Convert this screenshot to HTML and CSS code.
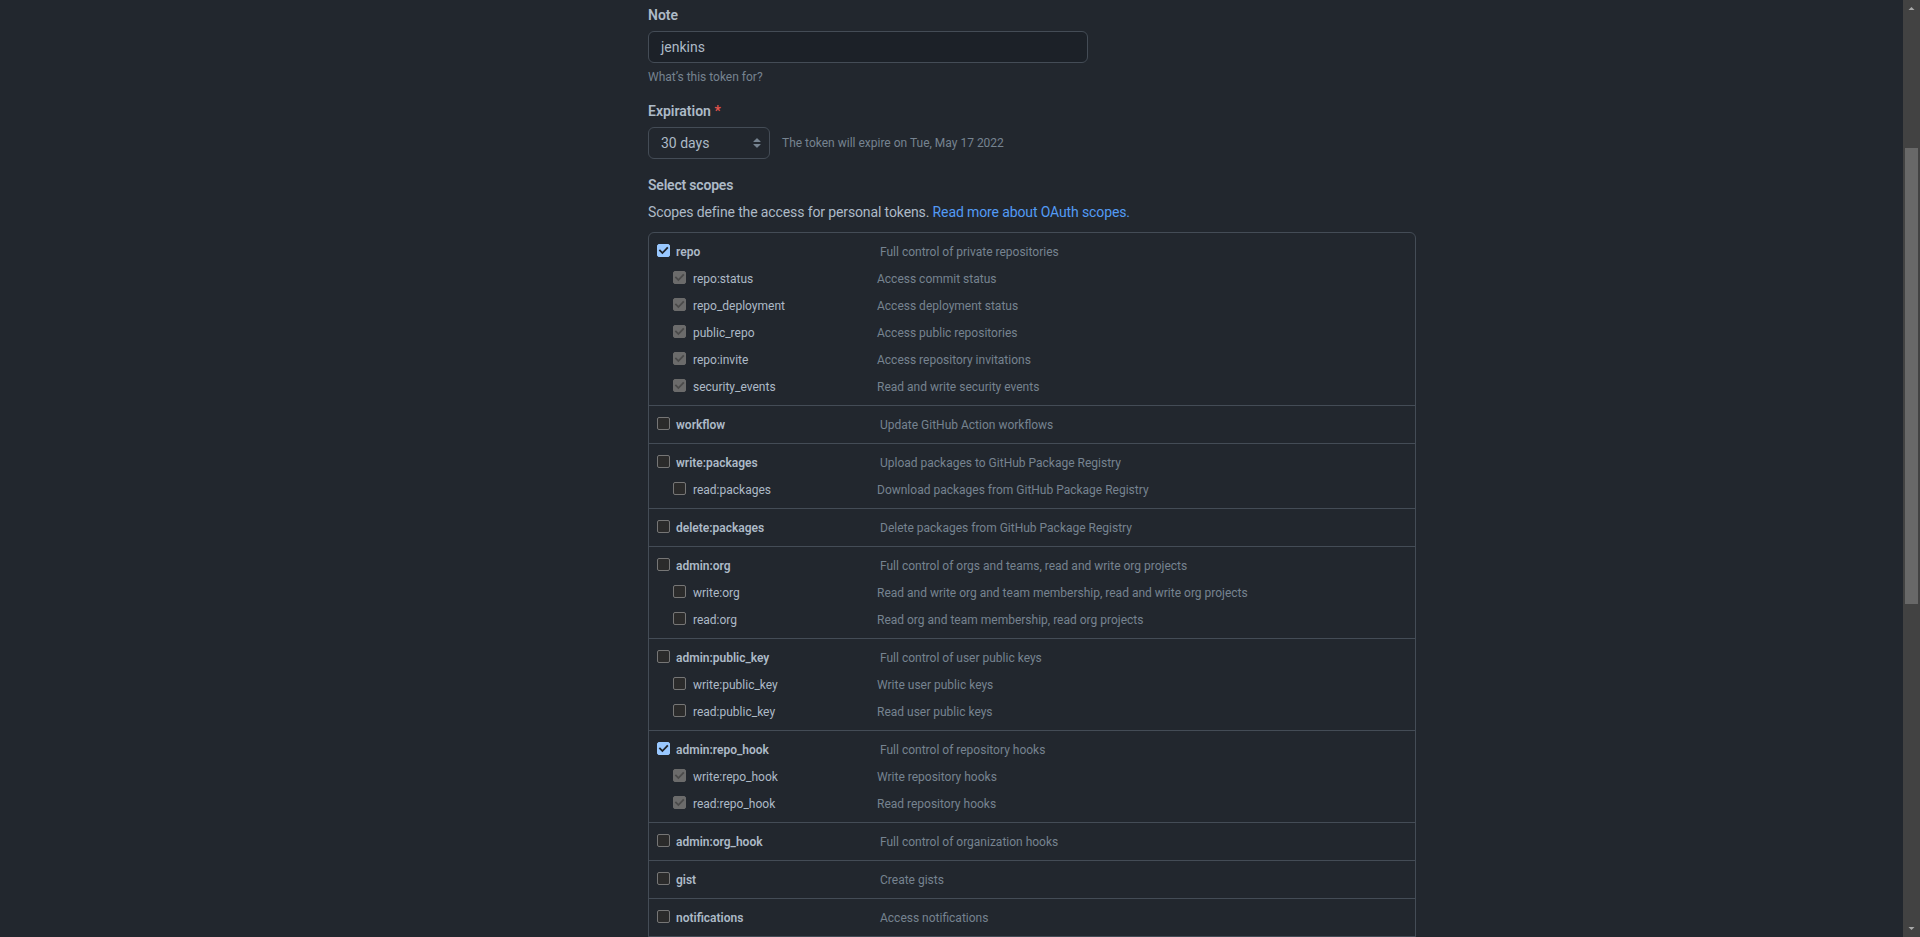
FILE: index.html
```html
<!DOCTYPE html>
<html lang="en">
<head>
<meta charset="utf-8">
<title>New personal access token</title>
<link rel="stylesheet" href="styles.css">
</head>
<body>
<div class="viewport">
  <div class="page">
    <div class="layout">
      <div class="sidebar"></div>
      <main class="main">
        <form class="token-form">
          <div class="field">
            <label class="field-label">Note</label>
            <div class="text-input">jenkins</div>
            <p class="hint">What’s this token for?</p>
          </div>

          <div class="field field-exp">
            <label class="field-label">Expiration <span class="req">*</span></label>
            <div class="exp-row">
              <div class="select">
                <span>30 days</span>
                <svg class="select-arrows" width="16" height="16" viewBox="0 0 16 16"><path fill="#768390" d="M4.427 9.427l3.396 3.396a.25.25 0 00.354 0l3.396-3.396A.25.25 0 0011.396 9H4.604a.25.25 0 00-.177.427zM4.427 6.573l3.396-3.396a.25.25 0 01.354 0l3.396 3.396A.25.25 0 0111.396 7H4.604a.25.25 0 01-.177-.427z"/></svg>
              </div>
              <span class="exp-note">The token will expire on Tue, May 17 2022</span>
            </div>
          </div>

          <div class="field field-scopes">
            <label class="field-label">Select scopes</label>
            <p class="scopes-intro">Scopes define the access for personal tokens. <a class="link">Read more about OAuth scopes.</a></p>

            <div class="scopes">
              <div class="group">
                <div class="row"><span class="cb cb-on"><svg viewBox="0 0 13 13"><path d="M3 6.6l2.4 2.4L10.2 4" /></svg></span><span class="name">repo</span><span class="desc">Full control of private repositories</span></div>
                <div class="row sub"><span class="cb cb-dis"><svg viewBox="0 0 13 13"><path d="M3 6.6l2.4 2.4L10.2 4" /></svg></span><span class="name">repo:status</span><span class="desc">Access commit status</span></div>
                <div class="row sub"><span class="cb cb-dis"><svg viewBox="0 0 13 13"><path d="M3 6.6l2.4 2.4L10.2 4" /></svg></span><span class="name">repo_deployment</span><span class="desc">Access deployment status</span></div>
                <div class="row sub"><span class="cb cb-dis"><svg viewBox="0 0 13 13"><path d="M3 6.6l2.4 2.4L10.2 4" /></svg></span><span class="name">public_repo</span><span class="desc">Access public repositories</span></div>
                <div class="row sub"><span class="cb cb-dis"><svg viewBox="0 0 13 13"><path d="M3 6.6l2.4 2.4L10.2 4" /></svg></span><span class="name">repo:invite</span><span class="desc">Access repository invitations</span></div>
                <div class="row sub"><span class="cb cb-dis"><svg viewBox="0 0 13 13"><path d="M3 6.6l2.4 2.4L10.2 4" /></svg></span><span class="name">security_events</span><span class="desc">Read and write security events</span></div>
              </div>

              <div class="group">
                <div class="row"><span class="cb"></span><span class="name">workflow</span><span class="desc">Update GitHub Action workflows</span></div>
              </div>

              <div class="group">
                <div class="row"><span class="cb"></span><span class="name">write:packages</span><span class="desc">Upload packages to GitHub Package Registry</span></div>
                <div class="row sub"><span class="cb"></span><span class="name">read:packages</span><span class="desc">Download packages from GitHub Package Registry</span></div>
              </div>

              <div class="group">
                <div class="row"><span class="cb"></span><span class="name">delete:packages</span><span class="desc">Delete packages from GitHub Package Registry</span></div>
              </div>

              <div class="group">
                <div class="row"><span class="cb"></span><span class="name">admin:org</span><span class="desc">Full control of orgs and teams, read and write org projects</span></div>
                <div class="row sub"><span class="cb"></span><span class="name">write:org</span><span class="desc">Read and write org and team membership, read and write org projects</span></div>
                <div class="row sub"><span class="cb"></span><span class="name">read:org</span><span class="desc">Read org and team membership, read org projects</span></div>
              </div>

              <div class="group">
                <div class="row"><span class="cb"></span><span class="name">admin:public_key</span><span class="desc">Full control of user public keys</span></div>
                <div class="row sub"><span class="cb"></span><span class="name">write:public_key</span><span class="desc">Write user public keys</span></div>
                <div class="row sub"><span class="cb"></span><span class="name">read:public_key</span><span class="desc">Read user public keys</span></div>
              </div>

              <div class="group">
                <div class="row"><span class="cb cb-on"><svg viewBox="0 0 13 13"><path d="M3 6.6l2.4 2.4L10.2 4" /></svg></span><span class="name">admin:repo_hook</span><span class="desc">Full control of repository hooks</span></div>
                <div class="row sub"><span class="cb cb-dis"><svg viewBox="0 0 13 13"><path d="M3 6.6l2.4 2.4L10.2 4" /></svg></span><span class="name">write:repo_hook</span><span class="desc">Write repository hooks</span></div>
                <div class="row sub"><span class="cb cb-dis"><svg viewBox="0 0 13 13"><path d="M3 6.6l2.4 2.4L10.2 4" /></svg></span><span class="name">read:repo_hook</span><span class="desc">Read repository hooks</span></div>
              </div>

              <div class="group">
                <div class="row"><span class="cb"></span><span class="name">admin:org_hook</span><span class="desc">Full control of organization hooks</span></div>
              </div>

              <div class="group">
                <div class="row"><span class="cb"></span><span class="name">gist</span><span class="desc">Create gists</span></div>
              </div>

              <div class="group">
                <div class="row"><span class="cb"></span><span class="name">notifications</span><span class="desc">Access notifications</span></div>
              </div>

              <div class="group group-more"></div>
            </div>
          </div>
        </form>
      </main>
    </div>
  </div>

  <div class="scrollbar">
    <div class="sb-btn"><svg width="17" height="17" viewBox="0 0 17 17"><path d="M5.5 10h6l-3-3z" fill="#a8a8a8"/></svg></div>
    <div class="sb-track"><div class="sb-thumb"></div></div>
    <div class="sb-btn"><svg width="17" height="17" viewBox="0 0 17 17"><path d="M5.5 7h6l-3 3z" fill="#a8a8a8"/></svg></div>
  </div>
</div>
</body>
</html>
```

FILE: styles.css
```css
html, body {
  margin: 0;
  padding: 0;
  height: 100%;
  overflow: hidden;
  background: #22272e;
}

body {
  font-family: Roboto, "Liberation Sans", Arial, sans-serif;
  color: #adbac7;
  font-size: 14px;
  line-height: 1.5;
}

.viewport {
  display: flex;
  height: 100%;
}

.page {
  flex: 1;
  overflow: hidden;
}

.layout {
  width: 1279px;
  box-sizing: border-box;
  margin: 0 auto;
  padding: 0 32px;
  display: flex;
  gap: 48px;
}

.sidebar {
  flex: 0 0 256px;
}

.main {
  flex: 1;
  padding-top: 5px;
}

.token-form {
  width: 768px;
}

.field-label {
  display: block;
  font-weight: 600;
  font-size: 14px;
  line-height: 21px;
  color: #adbac7;
}

.req {
  color: #e5534b;
}

.text-input {
  margin-top: 5px;
  width: 440px;
  height: 32px;
  box-sizing: border-box;
  padding: 0 12px;
  background: #1c2128;
  border: 1px solid #444c56;
  border-radius: 6px;
  font-size: 14px;
  line-height: 30px;
  color: #adbac7;
}

.hint {
  margin: 5px 0 0;
  font-size: 12px;
  line-height: 18px;
  color: #768390;
}

.field-exp {
  margin-top: 15px;
}

.exp-row {
  margin-top: 5px;
  display: flex;
  align-items: center;
  gap: 12px;
}

.select {
  width: 122px;
  height: 32px;
  box-sizing: border-box;
  padding: 0 4px 0 12px;
  border: 1px solid #444c56;
  border-radius: 6px;
  background: #22272e;
  display: flex;
  align-items: center;
  justify-content: space-between;
  font-size: 14px;
  color: #adbac7;
}

.select-arrows {
  display: block;
}

.exp-note {
  font-size: 12px;
  color: #768390;
}

.field-scopes {
  margin-top: 16px;
}

.field-scopes .field-label {
  letter-spacing: -0.2px;
}

.scopes-intro {
  margin: 6px 0 0;
  font-size: 14px;
  line-height: 21px;
  letter-spacing: -0.12px;
  color: #adbac7;
}

.link {
  color: #539bf5;
  text-decoration: none;
}

.scopes {
  margin-top: 9px;
  border: 1px solid #444c56;
  border-radius: 6px;
}

.group {
  padding: 5px 0;
  border-top: 1px solid #444c56;
}

.group:first-child {
  border-top: 0;
}

.group-more {
  height: 40px;
}

.row {
  display: flex;
  align-items: center;
  height: 27px;
  padding-left: 8px;
  font-size: 12px;
}

.row .name {
  flex: 0 0 204px;
  font-weight: 600;
  color: #adbac7;
}

.row .desc {
  color: #768390;
}

.row.sub {
  padding-left: 24px;
}

.row.sub .name {
  flex-basis: 184px;
  font-weight: 400;
}

.cb {
  flex: 0 0 13px;
  width: 13px;
  height: 13px;
  box-sizing: border-box;
  margin-right: 6px;
  margin-top: -3px;
  border: 1px solid #767676;
  border-radius: 2px;
  background: #2b2b2b;
}

.row.sub .cb {
  margin-right: 7px;
  margin-top: -2px;
}

.cb svg {
  display: block;
  width: 13px;
  height: 13px;
  margin: -1px;
  fill: none;
  stroke-width: 1.8;
  stroke-linecap: square;
}

.cb-on {
  background: #99c8ff;
  border-color: #99c8ff;
}

.cb-on svg {
  stroke: #1f2328;
}

.cb-dis {
  background: #6b6b6b;
  border-color: #6b6b6b;
}

.cb-dis svg {
  stroke: #4a4a4a;
}

.scrollbar {
  flex: 0 0 17px;
  display: flex;
  flex-direction: column;
  background: #424242;
}

.sb-btn {
  height: 17px;
}

.sb-btn svg {
  display: block;
}

.sb-track {
  flex: 1;
}

.sb-thumb {
  margin: 131px 2px 0;
  height: 456px;
  background: #686868;
}
```
